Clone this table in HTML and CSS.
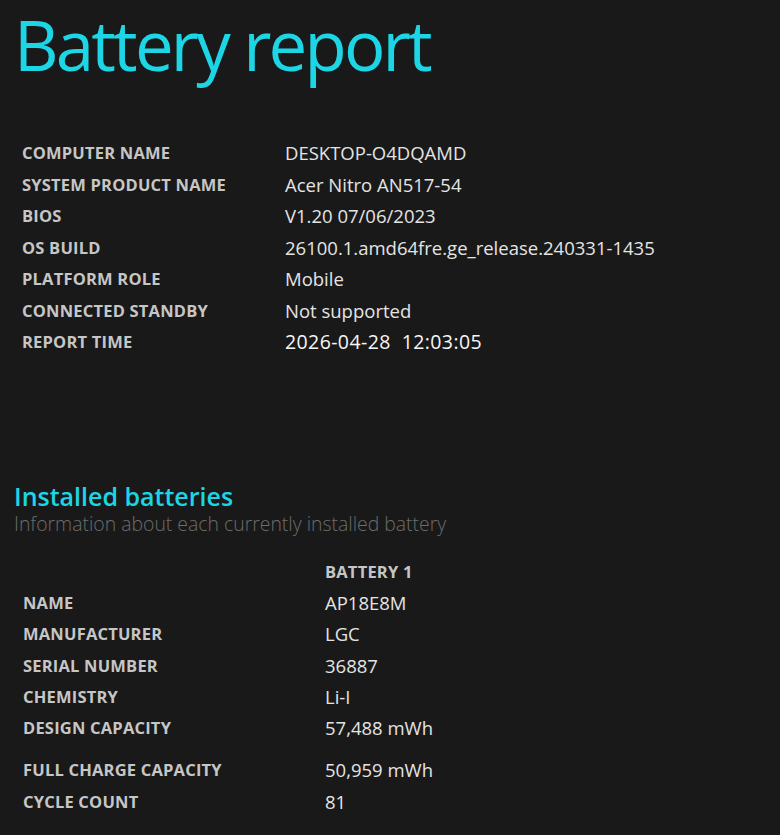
FILE: index.html
```html
<!DOCTYPE html>
<html>
<head>
<meta charset="utf-8">
<link rel="stylesheet" href="styles.css">
</head>
<body>
<h1 class="title">Battery report</h1>
<table class="info">
  <tr><td class="label">COMPUTER NAME</td><td class="value">DESKTOP-O4DQAMD</td></tr>
  <tr><td class="label">SYSTEM PRODUCT NAME</td><td class="value">Acer Nitro AN517-54</td></tr>
  <tr><td class="label">BIOS</td><td class="value">V1.20 07/06/2023</td></tr>
  <tr><td class="label">OS BUILD</td><td class="value">26100.1.amd64fre.ge_release.240331-1435</td></tr>
  <tr><td class="label">PLATFORM ROLE</td><td class="value">Mobile</td></tr>
  <tr><td class="label">CONNECTED STANDBY</td><td class="value">Not supported</td></tr>
  <tr><td class="label">REPORT TIME</td><td class="value strong">2026-04-28 &nbsp;12:03:05</td></tr>
</table>

<h2 class="section">Installed batteries</h2>
<div class="desc">Information about each currently installed battery</div>

<table class="batt">
  <tr><td class="label"></td><td class="head">BATTERY 1</td></tr>
  <tr><td class="label">NAME</td><td class="value">AP18E8M</td></tr>
  <tr><td class="label">MANUFACTURER</td><td class="value">LGC</td></tr>
  <tr><td class="label">SERIAL NUMBER</td><td class="value">36887</td></tr>
  <tr><td class="label">CHEMISTRY</td><td class="value">Li-I</td></tr>
  <tr><td class="label">DESIGN CAPACITY</td><td class="value">57,488 mWh</td></tr>
  <tr class="spacer"><td></td><td></td></tr>
  <tr><td class="label">FULL CHARGE CAPACITY</td><td class="value">50,959 mWh</td></tr>
  <tr><td class="label">CYCLE COUNT</td><td class="value">81</td></tr>
</table>
</body>
</html>
```
FILE: styles.css
```css
html, body {
  background: #191919;
}
body {
  margin: 0;
  padding: 0 0 0 14px;
  font-family: "Open Sans", "Noto Sans", sans-serif;
  color: #e2e2e2;
}
.title {
  margin: 0;
  padding-top: 0;
  font-size: 69px;
  font-weight: 400;
  color: #1cd6e6;
  line-height: 88px;
  letter-spacing: -2.8px;
}
.info {
  border-collapse: collapse;
  margin-top: 49px;
  margin-left: 2px;
}
.info td {
  padding: 0 6px;
  height: 31.5px;
  vertical-align: middle;
}
.info .label {
  width: 251px;
}
.label {
  font-size: 16.5px;
  font-weight: 700;
  letter-spacing: 0.2px;
  color: #c6c6c6;
  white-space: nowrap;
}
.value {
  font-size: 18.5px;
  color: #e4e4e4;
  white-space: nowrap;
}
.strong {
  color: #f6f6f6;
  font-size: 19.5px;
  font-weight: 500;
  letter-spacing: 0.4px;
}
.section {
  margin: 123px 0 0 0;
  font-size: 25px;
  font-weight: 600;
  color: #1cd6e6;
  line-height: 30px;
}
.desc {
  font-size: 19.4px;
  font-weight: 300;
  color: #6c6c6c;
  line-height: 26px;
}
.batt {
  border-collapse: collapse;
  margin-top: 19px;
  margin-left: 3px;
}
.batt td {
  padding: 0 6px;
  height: 31.3px;
  vertical-align: middle;
}
.batt .label {
  width: 290px;
}
.batt .head {
  font-size: 16.5px;
  font-weight: 700;
  letter-spacing: 0.2px;
  color: #c6c6c6;
  height: 30px;
}
.batt .spacer td {
  height: 11px;
}
```
